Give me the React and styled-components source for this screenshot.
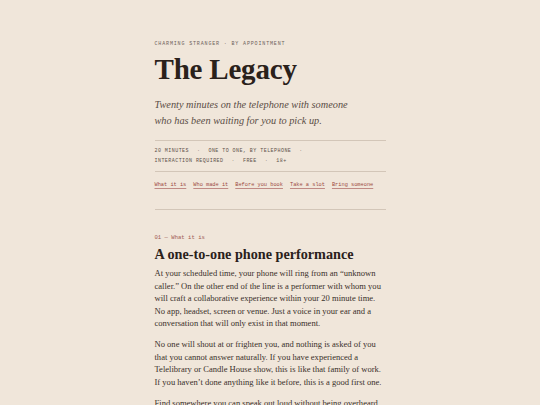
import React from "react";
import styled, { createGlobalStyle } from "styled-components";

const GlobalStyle = createGlobalStyle`
  html, body {
    margin: 0;
    padding: 0;
    background: #f0e6da;
  }
  body {
    font-family: "Liberation Serif", "Times New Roman", serif;
    color: #2d241e;
  }
`;

const meta = [
  ["20 MINUTES", "ONE TO ONE, BY TELEPHONE", ""],
  ["INTERACTION REQUIRED", "FREE", "18+"],
];

const links = ["What it is", "Who made it", "Before you book", "Take a slot", "Bring someone"];

function App() {
  return (
    <Page>
      <GlobalStyle />
      <Column>
        <Kicker>Charming Stranger · By Appointment</Kicker>
        <Title>The Legacy</Title>
        <Subtitle>
          Twenty minutes on the telephone with someone
          <br />
          who has been waiting for you to pick up.
        </Subtitle>
        <Meta>
          {meta.map((row, i) => (
            <MetaRow key={i}>
              {row.map((item, j) => (
                <React.Fragment key={j}>
                  {j > 0 && <Sep>·</Sep>}
                  {item && <span>{item}</span>}
                </React.Fragment>
              ))}
            </MetaRow>
          ))}
        </Meta>
        <Nav>
          {links.map((l) => (
            <NavLink key={l} href="#">
              {l}
            </NavLink>
          ))}
        </Nav>
        <Section>
          <Label>01 — What it is</Label>
          <Heading>A one-to-one phone performance</Heading>
          <Para>
            At your scheduled time, your phone will ring from an “unknown caller.” On the other end of
            the line is a performer with whom you will craft a collaborative experience within your 20
            minute time. No app, headset, screen or venue. Just a voice in your ear and a conversation
            that will only exist in that moment.
          </Para>
          <Para>
            No one will shout at or frighten you, and nothing is asked of you that you cannot answer
            naturally. If you have experienced a Telelibrary or Candle House show, this is like that
            family of work. If you haven’t done anything like it before, this is a good first one.
          </Para>
          <Para>
            Find somewhere you can speak out loud without being overheard, and keep your phone charged
            and close at hand.
          </Para>
        </Section>
      </Column>
    </Page>
  );
}

const Page = styled.div`
  height: 405px;
  overflow: hidden;
  padding-top: 40px;
  box-sizing: border-box;
`;

const Column = styled.div`
  width: 231px;
  margin: 0 auto;
`;

const Kicker = styled.div`
  font-family: "Liberation Mono", "DejaVu Sans Mono", monospace;
  font-size: 5px;
  line-height: 8px;
  letter-spacing: 0.85px;
  text-transform: uppercase;
  color: #6e625a;
`;

const Title = styled.h1`
  margin: 5px 0 0;
  font-size: 29px;
  line-height: 32px;
  font-weight: 700;
  color: #2a211b;
  letter-spacing: -0.2px;
`;

const Subtitle = styled.p`
  margin: 12px 0 0;
  font-size: 10.3px;
  line-height: 16px;
  font-style: italic;
  color: #5a4d45;
`;

const Meta = styled.div`
  margin-top: 11px;
  border-top: 1px solid #d3c6b8;
  border-bottom: 1px solid #d3c6b8;
  padding: 4.5px 0 5px;
`;

const MetaRow = styled.div`
  display: flex;
  align-items: center;
  font-family: "Liberation Mono", "DejaVu Sans Mono", monospace;
  font-size: 5px;
  line-height: 10px;
  letter-spacing: 0.45px;
  color: #5e524a;
  white-space: nowrap;
`;

const Sep = styled.span`
  margin: 0 8px;
  color: #8a7d73;
`;

const Nav = styled.nav`
  display: flex;
  gap: 7px;
  margin-top: 8px;
  padding-bottom: 19px;
  border-bottom: 1px solid #d3c6b8;
`;

const NavLink = styled.a`
  font-family: "Liberation Mono", "DejaVu Sans Mono", monospace;
  font-size: 5.3px;
  line-height: 10px;
  color: #9c4a42;
  text-decoration: underline;
  text-decoration-color: #c08a84;
  text-underline-offset: 1.5px;
  white-space: nowrap;
`;

const Section = styled.section`
  padding-top: 24px;
`;

const Label = styled.div`
  font-family: "Liberation Mono", "DejaVu Sans Mono", monospace;
  font-size: 5.6px;
  line-height: 8px;
  color: #a05a52;
`;

const Heading = styled.h2`
  margin: 3px 0 0;
  font-size: 14.2px;
  line-height: 18px;
  font-weight: 700;
  color: #2a211b;
`;

const Para = styled.p`
  margin: 4.5px 0 8.5px;
  font-size: 8.55px;
  line-height: 12.5px;
  color: #3a302a;

  & + & {
    margin-top: 0;
  }
`;

export default App;
